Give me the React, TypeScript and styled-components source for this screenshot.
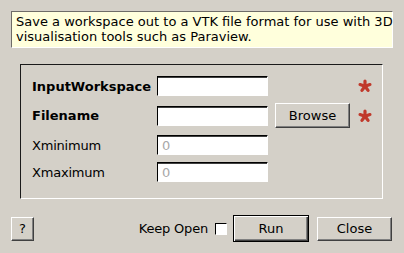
import styled, { createGlobalStyle } from "styled-components";

const GlobalStyle = createGlobalStyle`
  html, body {
    margin: 0;
    padding: 0;
    background: #d4d0c8;
  }
  body {
    font-family: "DejaVu Sans", "Liberation Sans", sans-serif;
    font-size: 13px;
    color: #000;
  }
`;

const Dialog = styled.div`
  width: 404px;
  height: 253px;
  box-sizing: border-box;
  padding: 11px 11px 0 11px;
  display: flex;
  flex-direction: column;
`;

const Description = styled.div`
  box-sizing: border-box;
  height: 37px;
  padding: 2px 4px 0 4px;
  background: #ffffdc;
  border: 1px solid;
  border-color: #6e6c68 #ffffff #ffffff #6e6c68;
  line-height: 15px;
  white-space: nowrap;
`;

const GroupBox = styled.div`
  margin: 16px 10px 0 9px;
  height: 135px;
  box-sizing: border-box;
  padding: 11px 0 0 11px;
  border: 1px solid;
  border-color: #1a1a1a #ffffff #ffffff #1a1a1a;
`;

const PropGrid = styled.div`
  display: grid;
  grid-template-columns: 118px 111px 75px 16px;
  column-gap: 7px;
  row-gap: 7px;
  align-items: center;
`;

const Label = styled.div<{ $bold?: boolean }>`
  font-weight: ${(p) => (p.$bold ? "bold" : "normal")};
  white-space: nowrap;
  letter-spacing: ${(p) => (p.$bold ? "0" : "-0.2px")};
`;

const Field = styled.input`
  box-sizing: border-box;
  width: 111px;
  height: 20px;
  margin: 0;
  padding: 0 4px;
  font: inherit;
  color: #000;
  background: #fff;
  border: 1px solid;
  border-color: #000 #fff #fff #000;
  box-shadow: inset 0 1px 0 #404040;
  outline: none;

  &:disabled {
    color: #a8a8a8;
  }
`;

const Button = styled.button<{ $w: number; $h?: number; $default?: boolean }>`
  box-sizing: border-box;
  width: ${(p) => p.$w}px;
  height: ${(p) => p.$h ?? 24}px;
  margin: 0;
  padding: 0;
  font: inherit;
  color: #000;
  background: #d4d0c8;
  border: 1px solid;
  border-color: ${(p) =>
    p.$default ? "#000" : "#ffffff #404040 #404040 #ffffff"};
  box-shadow: ${(p) =>
    p.$default
      ? "inset 1px 1px 0 #fff, inset -1px -1px 0 #404040, inset -2px -2px 0 #808080"
      : "inset -1px -1px 0 #808080"};
`;

const CloseButton = styled(Button)`
  margin-left: 8px;
`;

const Empty = styled.div``;

const Required = styled.svg`
  display: block;
`;

const Footer = styled.div`
  margin-top: 16px;
  padding-right: 1px;
  display: flex;
  align-items: center;
`;

const Spacer = styled.div`
  flex: 1;
`;

const KeepOpen = styled.label`
  display: flex;
  align-items: center;
  gap: 7px;
  margin-right: 6px;
  letter-spacing: -0.2px;
`;

const Check = styled.span`
  box-sizing: border-box;
  width: 12px;
  height: 12px;
  background: #fff;
  border: 1px solid;
  border-color: #000 #fff #fff #000;
`;

const Star = () => (
  <Required width="16" height="14" viewBox="0 0 16 14">
    {[-90, -18, 54, 126, 198].map((a) => {
      const r = (a * Math.PI) / 180;
      return (
        <line
          key={a}
          x1="8"
          y1="7.2"
          x2={8 + Math.cos(r) * 5.2}
          y2={7.2 + Math.sin(r) * 5.2}
          stroke="#c0392b"
          strokeWidth="3.2"
          strokeLinecap="round"
        />
      );
    })}
  </Required>
);

export default function App() {
  return (
    <>
      <GlobalStyle />
      <Dialog>
        <Description>
          Save a workspace out to a VTK file format for use with 3D
          <br />
          visualisation tools such as Paraview.
        </Description>
        <GroupBox>
          <PropGrid>
            <Label $bold>InputWorkspace</Label>
            <Field />
            <Empty />
            <Star />

            <Label $bold>Filename</Label>
            <Field />
            <Button $w={75} $h={25}>Browse</Button>
            <Star />

            <Label>Xminimum</Label>
            <Field disabled defaultValue="0" />
            <Empty />
            <Empty />

            <Label>Xmaximum</Label>
            <Field disabled defaultValue="0" />
            <Empty />
            <Empty />
          </PropGrid>
        </GroupBox>
        <Footer>
          <Button $w={23}>?</Button>
          <Spacer />
          <KeepOpen>
            Keep Open
            <Check />
          </KeepOpen>
          <Button $w={76} $h={27} $default>
            Run
          </Button>
          <CloseButton $w={75}>Close</CloseButton>
        </Footer>
      </Dialog>
    </>
  );
}
